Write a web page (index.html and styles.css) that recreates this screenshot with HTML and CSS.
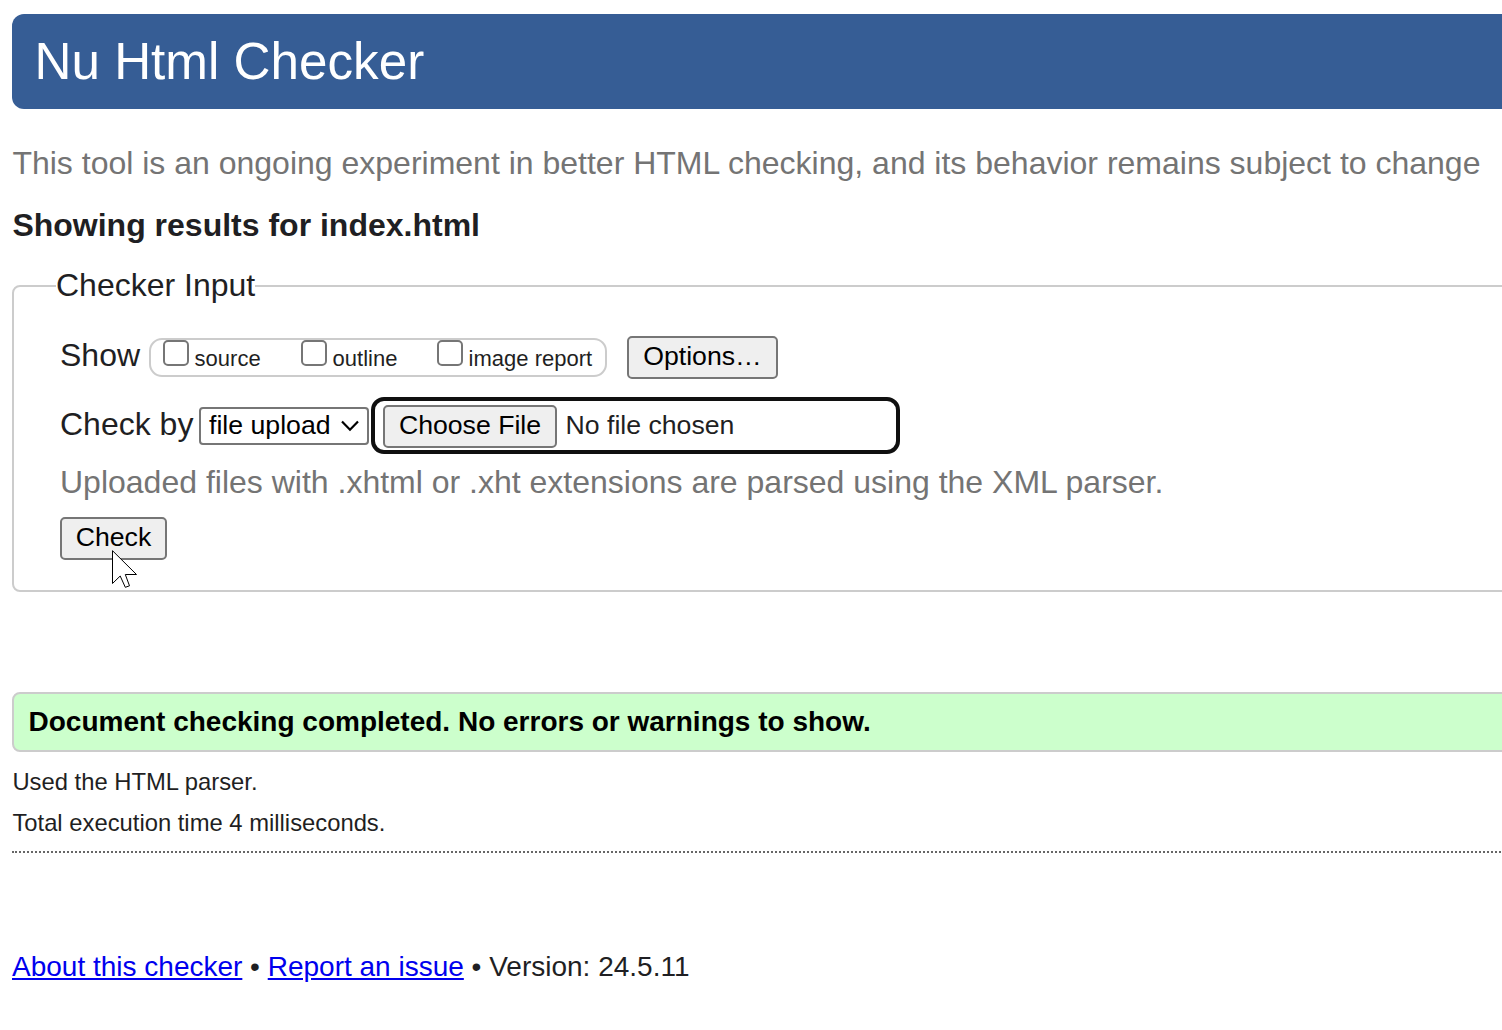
FILE: index.html
```html
<!DOCTYPE html>
<html lang="en">
<head>
<meta charset="utf-8">
<title>Nu Html Checker</title>
<link rel="stylesheet" href="styles.css">
</head>
<body>
<header class="banner"><h1>Nu Html Checker</h1></header>
<p class="intro">This tool is an ongoing experiment in better HTML checking, and its behavior remains subject to change</p>
<h2 class="heading">Showing results for index.html</h2>
<form>
<fieldset class="inputs">
  <legend>Checker Input</legend>
  <div class="row show-row">
    <span class="row-label show-label">Show</span>
    <div class="pill">
      <label class="opt source"><input type="checkbox"><span>source</span></label>
      <label class="opt outline"><input type="checkbox"><span>outline</span></label>
      <label class="opt"><input type="checkbox"><span>image report</span></label>
    </div>
    <button type="button" class="btn options">Options…</button>
  </div>
  <div class="row by-row">
    <span class="row-label by-label">Check by</span>
    <div class="select"><span>file upload</span>
      <svg class="chevron" width="18" height="12" viewBox="0 0 18 12"><path d="M1 1.500 9 9.700l8-8.200" fill="none" stroke="#000" stroke-width="2.2"/></svg>
    </div>
    <div class="file"><button type="button" class="btn choose">Choose File</button><span class="file-name">No file chosen</span></div>
  </div>
  <p class="hint">Uploaded files with .xhtml or .xht extensions are parsed using the XML parser.</p>
  <div class="submit"><button type="button" class="btn check">Check</button>
    <svg class="cursor" width="26" height="40" viewBox="0 0 26 40"><path d="M.5.7V33.500L8.200 26l5.100 11.300 4.200-1.500-4.200-11.300H24.500Z" fill="#fff" stroke="#000" stroke-width="1"/></svg>
  </div>
</fieldset>
</form>
<p class="success">Document checking completed. No errors or warnings to show.</p>
<p class="stat">Used the HTML parser.</p>
<p class="stat">Total execution time 4 milliseconds.</p>
<footer class="footer"><a href="#">About this checker</a> • <a href="#">Report an issue</a> • <span>Version: 24.5.11</span></footer>
</body>
</html>
```
FILE: styles.css
```css
* { box-sizing: border-box; }
html { overflow: hidden; }
body {
  margin: 0;
  padding: 14px 0 0 12px;
  width: 1540px;
  height: 1030px;
  overflow: hidden;
  background: #fff;
  color: #1f1f23;
  font: 32px/36px "Liberation Sans", Arial, sans-serif;
  white-space: nowrap;
}
p, h1, h2 { margin: 0; }
.banner {
  height: 95px;
  padding-left: 22.5px;
  border-radius: 12px;
  background: #365d95;
}
.banner h1 {
  color: #fff;
  font-size: 51.2px;
  font-weight: 400;
  line-height: 95px;
}
.intro { margin-top: 36px; padding-left: .4px; color: #747474; }
.heading { margin-top: 26px; padding-left: .4px; font-size: 32px; }
.inputs {
  height: 325px;
  margin: 24px 0 0;
  padding: 31px 0 0 46px;
  border: 2px solid #ccc;
  border-radius: 8px;
}
legend { height: 38px; margin-left: -4px; padding: 0; }
.row { display: flex; align-items: flex-start; }
.row-label { flex: none; margin-top: 1px; }
.show-label { width: 89px; }
.pill {
  display: flex;
  width: 458px;
  height: 39px;
  margin-top: 2px;
  padding-left: 12px;
  border: 2px solid #ccc;
  border-radius: 13px;
}
.opt { display: flex; font-size: 22px; line-height: 25px; }
.opt input {
  appearance: none;
  width: 26px;
  height: 26px;
  margin: 0 5.6px 0 0;
  border: 2px solid #767676;
  border-radius: 5px;
  background: #fff;
}
.opt span { margin-top: 6px; }
.opt.source { width: 138px; }
.opt.outline { width: 136px; }
.btn {
  flex: none;
  height: 43px;
  padding: 0 0 2px;
  border: 2px solid #767676;
  border-radius: 5px;
  background: #efefef;
  color: #000;
  font: 26.67px/37px "Liberation Sans", Arial, sans-serif;
}
.options { width: 151px; margin-left: 20px; }
.by-row { margin-top: 18px; }
.by-label { width: 139px; margin-top: 9px; }
.select {
  display: flex;
  align-items: center;
  width: 170px;
  height: 38px;
  margin-top: 10px;
  padding-left: 8px;
  border: 2px solid #767676;
  border-radius: 4px;
  color: #000;
  font-size: 26.67px;
}
.select span { margin-top: -2px; }
.chevron { margin-left: 10px; }
.file {
  display: flex;
  width: 529px;
  height: 57px;
  margin-left: 2px;
  padding: 4px 8px;
  border: 4px solid #101010;
  border-radius: 13px;
  font-size: 26.67px;
}
.choose { width: 174px; }
.file-name { margin-left: 8.5px; line-height: 40px; }
.hint { margin-top: 10px; color: #747474; }
.submit { position: relative; margin-top: 17px; }
.check { display: block; width: 107px; }
.cursor { position: absolute; left: 52px; top: 33px; }
.success {
  height: 60px;
  margin: 100px 0 14px;
  padding-left: 14.5px;
  border: 2px solid #ccc;
  border-radius: 8px;
  background: #cfc;
  color: #000;
  font-size: 28px;
  font-weight: 700;
  line-height: 56px;
}
.stat { height: 41px; padding-left: .4px; font-size: 23.8px; line-height: 32px; }
.footer {
  margin-top: 3px;
  padding-top: 96px;
  border-top: 2px dotted #666;
  font-size: 28px;
}
.footer a { color: #00e; }
```
